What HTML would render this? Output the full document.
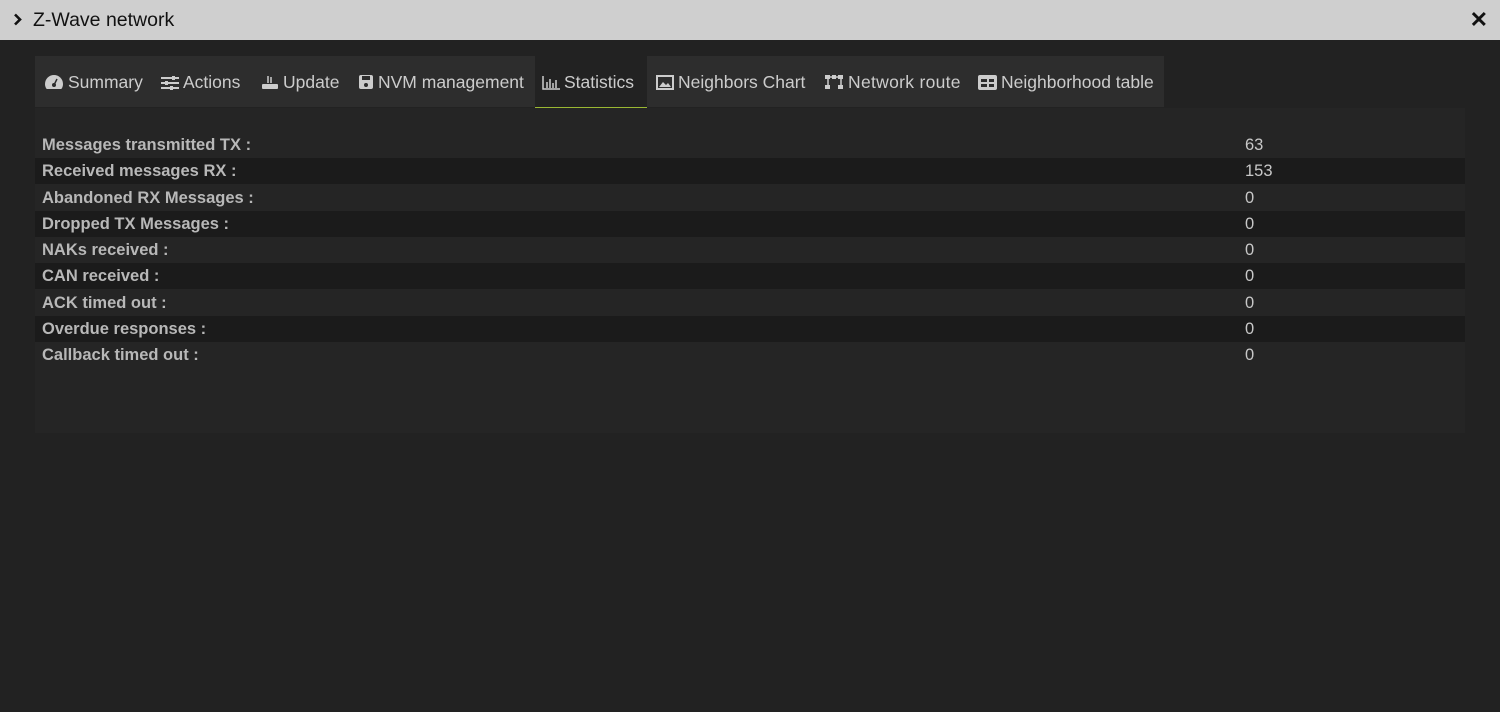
<!DOCTYPE html>
<html><head><style>
body{margin:0;width:1500px;height:712px;background:#222;font-family:"Liberation Sans",sans-serif;overflow:hidden;position:relative}
.hdr{position:absolute;left:0;top:0;width:1500px;height:40px;background:#cfcfcf;color:#111;font-size:19.5px}
.hdr .t{position:absolute;left:33px;top:9px}
.hdr .a{position:absolute;left:13px;top:13px}
.hdr .x{position:absolute;right:12px;top:7px;font-weight:bold;font-size:22px}
.tabs{position:absolute;left:35px;top:56px;width:1129px;height:51px;background:#2d2d2d}
.tab{position:absolute;top:0;height:51px;line-height:53px;color:#ccc;font-size:17.5px;white-space:nowrap}
.tab.act{background:#222;border-bottom:1px solid #9ab833}
.ic{display:inline-block;vertical-align:-2px;margin-right:4px}
.panel{position:absolute;left:35px;top:108px;width:1430px;height:325px;background:#252525}
.row{position:absolute;left:0;width:1430px;height:26px;color:#b8b8b8;font-size:16.5px;line-height:27px}
.row.d{background:#1b1b1b}
.row b{position:absolute;left:7px}
.row span{position:absolute;left:1210px;color:#c8c8c8}
</style></head><body>
<div class="hdr"><svg class="a" width="9" height="13" viewBox="0 0 9 13"><path d="M2 1.5l5 5-5 5" stroke="#111" stroke-width="2.6" fill="none"/></svg><span class="t">Z-Wave network</span><span class="x">&#x2715;</span></div>
<div class="tabs">
<div class="tab" style="left:9px"><svg class="ic" width="20" height="16" viewBox="0 0 20 16"><path d="M10 1a9 9 0 0 0-9 9c0 2 .6 3.8 1.7 5h14.6c1.1-1.2 1.7-3 1.7-5a9 9 0 0 0-9-9z" fill="#ccc"/><circle cx="10" cy="11" r="2" fill="#2d2d2d"/><path d="M10 11l3-6" stroke="#2d2d2d" stroke-width="1.5"/></svg>Summary</div>
<div class="tab" style="left:126px"><svg class="ic" width="18" height="14" viewBox="0 0 18 14"><path d="M0 2h18M0 7h18M0 12h18" stroke="#ccc" stroke-width="2"/><rect x="11" y="0" width="3" height="4" fill="#ccc"/><rect x="4" y="5" width="3" height="4" fill="#ccc"/><rect x="9" y="10" width="3" height="4" fill="#ccc"/></svg>Actions</div>
<div class="tab" style="left:226px"><svg class="ic" width="18" height="16" viewBox="0 0 18 16"><rect x="1" y="10" width="16" height="5" rx="1" fill="#ccc"/><path d="M7 9V2M10 9V3" stroke="#ccc" stroke-width="1.5"/></svg>Update</div>
<div class="tab" style="left:323px"><svg class="ic" width="16" height="16" viewBox="0 0 16 16"><rect x="1" y="1" width="14" height="14" rx="2" fill="#ccc"/><rect x="4" y="2" width="8" height="4" fill="#2d2d2d"/><circle cx="8" cy="11" r="2" fill="#2d2d2d"/></svg>NVM management</div>
<div class="tab act" style="left:500px;width:112px"><span style="margin-left:7px"></span><svg class="ic" width="18" height="14" viewBox="0 0 18 14"><path d="M1 0v13h17" stroke="#ccc" stroke-width="1.5" fill="none"/><path d="M5 12V6M8 12V3M11 12V7M14 12V4" stroke="#ccc" stroke-width="1.5"/></svg>Statistics</div>
<div class="tab" style="left:621px"><svg class="ic" width="18" height="15" viewBox="0 0 18 15"><rect x="1" y="1" width="16" height="13" fill="none" stroke="#ccc" stroke-width="2"/><path d="M3 12l4-5 3 3 2-2 3 4z" fill="#ccc"/></svg>Neighbors Chart</div>
<div class="tab" style="left:789px"><svg class="ic" width="20" height="16" viewBox="0 0 20 16"><rect x="1" y="1" width="5" height="4" fill="#ccc"/><rect x="8" y="1" width="4" height="4" fill="#ccc"/><rect x="14" y="1" width="5" height="4" fill="#ccc"/><rect x="1" y="11" width="5" height="4" fill="#ccc"/><rect x="14" y="11" width="5" height="4" fill="#ccc"/><path d="M4 5v6M17 5v6M6 3h8" stroke="#ccc" stroke-width="1.5"/></svg><span style="letter-spacing:.3px">Network route</span></div>
<div class="tab" style="left:943px"><svg class="ic" width="19" height="15" viewBox="0 0 19 15"><rect x="0" y="0" width="19" height="15" rx="2" fill="#ccc"/><rect x="3" y="4" width="6" height="3" fill="#2d2d2d"/><rect x="11" y="4" width="5" height="3" fill="#2d2d2d"/><rect x="3" y="9" width="6" height="3" fill="#2d2d2d"/><rect x="11" y="9" width="5" height="3" fill="#2d2d2d"/></svg>Neighborhood table</div>
</div>
<div class="panel">
<div class="row" style="top:24px"><b>Messages transmitted TX :</b><span>63</span></div>
<div class="row d" style="top:50px"><b>Received messages RX :</b><span>153</span></div>
<div class="row" style="top:77px"><b>Abandoned RX Messages :</b><span>0</span></div>
<div class="row d" style="top:103px"><b>Dropped TX Messages :</b><span>0</span></div>
<div class="row" style="top:129px"><b>NAKs received :</b><span>0</span></div>
<div class="row d" style="top:155px"><b>CAN received :</b><span>0</span></div>
<div class="row" style="top:182px"><b>ACK timed out :</b><span>0</span></div>
<div class="row d" style="top:208px"><b>Overdue responses :</b><span>0</span></div>
<div class="row" style="top:234px"><b>Callback timed out :</b><span>0</span></div>
</div>
</body></html>
